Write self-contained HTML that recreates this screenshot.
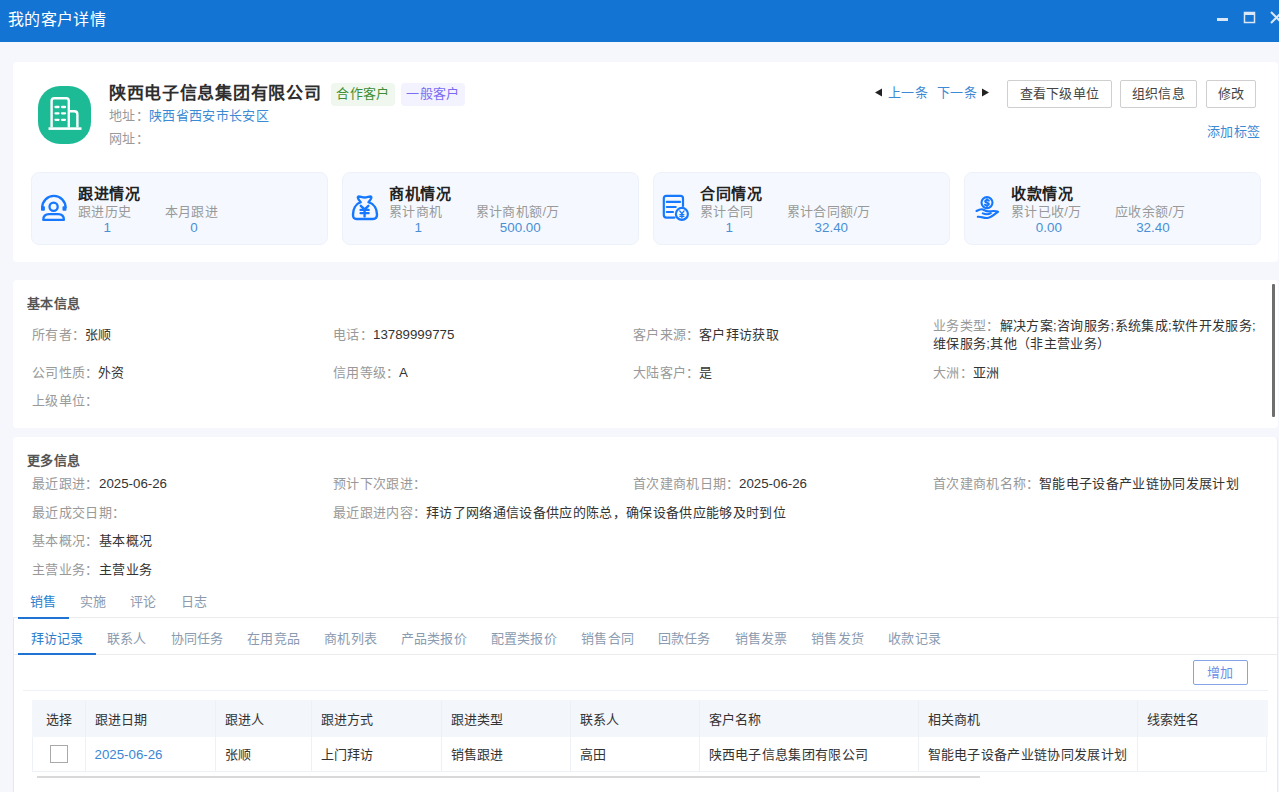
<!DOCTYPE html>
<html lang="zh-CN">
<head>
<meta charset="utf-8">
<style>
*{box-sizing:border-box;margin:0;padding:0}
html,body{width:1279px;height:792px;overflow:hidden}
body{position:relative;background:#f5f7fc;font-family:"Liberation Sans",sans-serif;color:#333;font-size:13px;letter-spacing:.33px}
.num{font-size:13.3px;letter-spacing:0}
.a{position:absolute;white-space:nowrap;line-height:20px}
.hdr{position:absolute;left:0;top:0;width:1279px;height:42px;background:#1374d4}
.card{position:absolute;left:13px;width:1265px;background:#fff;border-radius:4px}
.lbl{color:#999}
.val{color:#333}
.blue{color:#3d8ad4}
.tag{position:absolute;top:83px;height:23px;border-radius:4px;font-size:13px;letter-spacing:.33px;line-height:21px;text-align:center}
.btn{position:absolute;top:80px;height:28px;border:1px solid #cfcfcf;border-radius:2px;background:#fff;color:#444;font-size:13px;letter-spacing:.33px;line-height:26px;text-align:center}
.stat{position:absolute;top:172px;width:297px;height:73px;background:#f5f9ff;border:1px solid #edf2fa;border-radius:8px}
.stat svg{position:absolute}
.st{position:absolute;left:46px;top:11px;font-size:15px;letter-spacing:.5px;font-weight:bold;color:#222;line-height:20px;white-space:nowrap}
.items{position:absolute;left:46px;top:30px;white-space:nowrap}
.it{display:inline-block;margin-right:33.5px;vertical-align:top}
.it .l{color:#999;font-size:13px;letter-spacing:.33px;line-height:18px}
.it .n{color:#4a8fd4;font-size:13.4px;letter-spacing:0;line-height:13px;text-align:center;padding-left:5px}
.sc{letter-spacing:.5px}
</style>
</head>
<body>
<!-- header -->
<div class="hdr"></div>
<div class="a" style="left:8px;top:10px;color:#fff;font-size:16px;line-height:20px">我的客户详情</div>
<svg style="position:absolute;left:1210px;top:8px" width="69" height="20" viewBox="0 0 69 20">
  <rect x="7" y="10" width="11" height="3" fill="#dbe7f6"/>
  <rect x="34.5" y="4.5" width="10" height="10" fill="none" stroke="#dbe7f6" stroke-width="1.5"/>
  <rect x="34" y="4" width="11" height="3" fill="#dbe7f6"/>
  <path d="M61 4 L72 15 M72 4 L61 15" stroke="#dbe7f6" stroke-width="2"/>
</svg>

<!-- card 1 -->
<div class="card" style="top:62px;height:200px"></div>
<div style="position:absolute;left:38px;top:86px;width:53px;height:58px;background:#1dba96;border-radius:22px"></div>
<svg style="position:absolute;left:38px;top:86px" width="53" height="58" viewBox="0 0 53 58">
  <path d="M13.6 41.5 V14.8 Q13.6 12.2 16.2 12.2 H28.2 Q30.8 12.2 30.8 14.8 V41.5" fill="none" stroke="#fff" stroke-width="2.4"/>
  <path d="M30.8 25.3 H36.3 Q39.4 25.3 39.4 28.4 V41.5" fill="none" stroke="#fff" stroke-width="2.4"/>
  <rect x="10.5" y="41.3" width="33" height="2.6" fill="#fff"/>
  <g stroke="#fff" stroke-width="2.3" stroke-linecap="round">
    <path d="M17.5 21 H20.5 M24 21 H27 M17.5 27.3 H20.5 M24 27.3 H27 M17.5 33.8 H20.5 M24 33.8 H27"/>
  </g>
</svg>
<div class="a" style="left:109px;top:84px;font-size:17px;letter-spacing:.7px;font-weight:bold;color:#2e2e2e;line-height:20px">陕西电子信息集团有限公司</div>
<div class="tag" style="left:331px;width:64px;background:#eff7ee;color:#3e8e33">合作客户</div>
<div class="tag" style="left:401px;width:64px;background:#f3f2ff;color:#7a6cf2">一般客户</div>
<div class="a" style="left:109px;top:106px;font-size:13px;letter-spacing:.33px"><span class="lbl">地址：</span></div>
<div class="a blue" style="left:149px;top:106px;font-size:13px;letter-spacing:.33px">陕西省西安市长安区</div>
<div class="a lbl" style="left:109px;top:129px;font-size:13px;letter-spacing:.33px">网址：</div>

<svg style="position:absolute;left:874px;top:88px" width="8" height="10"><path d="M1 4.5 L8 0.5 V8.5 Z" fill="#222"/></svg>
<div class="a blue" style="left:888px;top:83px;font-size:13px;letter-spacing:.33px">上一条</div>
<div class="a blue" style="left:937px;top:83px;font-size:13px;letter-spacing:.33px">下一条</div>
<svg style="position:absolute;left:981px;top:88px" width="8" height="10"><path d="M8 4.5 L1 0.5 V8.5 Z" fill="#222"/></svg>
<div class="btn" style="left:1007px;width:105px">查看下级单位</div>
<div class="btn" style="left:1120px;width:77px">组织信息</div>
<div class="btn" style="left:1206px;width:50px">修改</div>
<div class="a blue" style="left:1207px;top:122px;font-size:13px;letter-spacing:.33px">添加标签</div>

<!-- stat cards -->
<div class="stat" style="left:31px">
  <svg width="36" height="38" viewBox="0 0 36 38" style="left:4px;top:15px">
    <g fill="none" stroke="#1677ff" stroke-width="2.3" stroke-linejoin="round" stroke-linecap="round">
      <path d="M6.2 19.6 A11.7 11.7 0 0 1 29.6 19.6"/>
      <circle cx="17.6" cy="18.8" r="4.1"/>
      <path d="M7.3 31.9 C7.3 28.2 9.5 26.2 13 26.2 H22.2 C25.7 26.2 27.9 28.2 27.9 31.9 Z"/>
    </g>
    <rect x="5" y="18.3" width="3.9" height="4.4" rx="0.8" fill="#1677ff"/>
    <rect x="26.5" y="18.3" width="3.9" height="4.4" rx="0.8" fill="#1677ff"/>
  </svg>
  <div class="st">跟进情况</div>
  <div class="items"><div class="it"><div class="l">跟进历史</div><div class="n">1</div></div><div class="it"><div class="l">本月跟进</div><div class="n">0</div></div></div>
</div>
<div class="stat" style="left:342px">
  <svg width="36" height="38" viewBox="0 0 36 38" style="left:3px;top:15px">
    <g fill="none" stroke="#1677ff" stroke-width="2.4" stroke-linejoin="round" stroke-linecap="round">
      <path d="M12.3 8.6 C13.5 8.1 16 9.5 18.6 9.5 C21.2 9.5 23.7 8.1 24.9 8.6 C26 9.1 25.3 11 22.5 14.2 C28.5 16 31 21.5 31 26.5 C31 30 29.5 31 27 31 L10.5 31 C8 31 7 30 7 26.5 C7 21.5 9.5 16 14.7 14.2 C11.9 11 11.2 9.1 12.3 8.6 Z"/>
      <path d="M14.8 17.8 L18.6 21.4 L22.4 17.8 M14.6 21.9 H22.6 M14.6 25.1 H22.6 M18.6 21.4 V28.4"/>
    </g>
  </svg>
  <div class="st">商机情况</div>
  <div class="items"><div class="it"><div class="l">累计商机</div><div class="n">1</div></div><div class="it"><div class="l">累计商机额/万</div><div class="n">500.00</div></div></div>
</div>
<div class="stat" style="left:653px">
  <svg width="36" height="38" viewBox="0 0 36 38" style="left:2px;top:15px">
    <g fill="none" stroke="#1677ff" stroke-width="2.2" stroke-linejoin="round" stroke-linecap="round">
      <path d="M18.5 29.6 H10.3 Q7.8 29.6 7.8 27.1 V10.3 Q7.8 7.8 10.3 7.8 H24.5 Q27 7.8 27 10.3 V18"/>
      <path d="M10.8 13.9 H24 M10.8 19 H19.7 M10.8 24 H17"/>
      <circle cx="25.9" cy="25.9" r="6"/>
    </g>
    <g fill="none" stroke="#1677ff" stroke-width="1.3" stroke-linecap="round">
      <path d="M23.7 22.9 L25.9 25.6 L28.1 22.9 M23.9 26.6 H27.9 M23.9 28.4 H27.9 M25.9 25.6 V29.8"/>
    </g>
  </svg>
  <div class="st">合同情况</div>
  <div class="items"><div class="it"><div class="l">累计合同</div><div class="n">1</div></div><div class="it"><div class="l">累计合同额/万</div><div class="n">32.40</div></div></div>
</div>
<div class="stat" style="left:964px">
  <svg width="36" height="38" viewBox="0 0 36 38" style="left:5px;top:15px">
    <g fill="none" stroke="#1677ff" stroke-width="2.1" stroke-linejoin="round" stroke-linecap="round">
      <circle cx="17" cy="14.6" r="5.5"/>
      <path d="M18.8 12.6 C18.2 11.8 15.2 11.6 15.2 13.3 C15.2 15 18.9 14.3 18.9 16.1 C18.9 17.6 15.9 17.6 15 16.8 M17 11.2 V12.1 M17 17.4 V18.1"/>
      <path d="M6.5 23 C9 21.5 11 20.5 13 21.5 C15 22.5 16.5 23.6 19 23.4 C22 23.2 25 22.3 27.8 23.8"/>
      <path d="M12.8 25.4 C15 26.3 18.5 26.5 20.8 25.2"/>
      <path d="M7.8 28.8 C11 28.2 14 30.5 17.5 30 C21 29.5 25 26 27.8 23.8"/>
    </g>
  </svg>
  <div class="st">收款情况</div>
  <div class="items"><div class="it"><div class="l">累计已收/万</div><div class="n">0.00</div></div><div class="it"><div class="l">应收余额/万</div><div class="n">32.40</div></div></div>
</div>

<!-- card 2 basic info -->
<div class="card" style="top:280px;height:148px"></div>
<div class="a" style="left:27px;top:294px;font-size:13px;letter-spacing:.33px;font-weight:bold;color:#555">基本信息</div>
<div class="a" style="left:32px;top:325px"><span class="lbl">所有者：</span></div><div class="a val" style="left:85px;top:325px">张顺</div>
<div class="a" style="left:333px;top:325px"><span class="lbl">电话：</span></div><div class="a val num" style="left:373px;top:325px">13789999775</div>
<div class="a" style="left:633px;top:325px"><span class="lbl">客户来源：</span></div><div class="a val" style="left:699px;top:325px">客户拜访获取</div>
<div style="position:absolute;left:933px;top:317px;width:340px;white-space:nowrap;line-height:17.6px;font-size:13px;letter-spacing:.33px"><span class="lbl">业务类型：</span><span class="val">解决方案<span class="sc">;</span>咨询服务<span class="sc">;</span>系统集成<span class="sc">;</span>软件开发服务<span class="sc">;</span><br>维保服务<span class="sc">;</span>其他（非主营业务）</span></div>
<div class="a" style="left:32px;top:363px"><span class="lbl">公司性质：</span></div><div class="a val" style="left:98px;top:363px">外资</div>
<div class="a" style="left:333px;top:363px"><span class="lbl">信用等级：</span></div><div class="a val num" style="left:399px;top:363px">A</div>
<div class="a" style="left:633px;top:363px"><span class="lbl">大陆客户：</span></div><div class="a val" style="left:699px;top:363px">是</div>
<div class="a" style="left:933px;top:363px"><span class="lbl">大洲：</span></div><div class="a val" style="left:973px;top:363px">亚洲</div>
<div class="a" style="left:32px;top:391px"><span class="lbl">上级单位：</span></div>
<div style="position:absolute;left:1272px;top:284px;width:3px;height:133px;background:#6e6e6e;border-radius:1px"></div>

<!-- card 3 more info -->
<div class="card" style="top:437px;height:355px;border-radius:4px 4px 0 0;border-right:1px solid #eceef3"></div>
<div class="a" style="left:27px;top:451px;font-size:13px;letter-spacing:.33px;font-weight:bold;color:#555">更多信息</div>
<div class="a" style="left:32px;top:474px"><span class="lbl">最近跟进：</span></div><div class="a val num" style="left:99px;top:474px">2025-06-26</div>
<div class="a" style="left:333px;top:474px"><span class="lbl">预计下次跟进：</span></div>
<div class="a" style="left:633px;top:474px"><span class="lbl">首次建商机日期：</span></div><div class="a val num" style="left:739px;top:474px">2025-06-26</div>
<div class="a" style="left:933px;top:474px"><span class="lbl">首次建商机名称：</span></div><div class="a val" style="left:1039px;top:474px">智能电子设备产业链协同发展计划</div>
<div class="a" style="left:32px;top:503px"><span class="lbl">最近成交日期：</span></div>
<div class="a" style="left:333px;top:503px"><span class="lbl">最近跟进内容：</span></div><div class="a val" style="left:426px;top:503px">拜访了网络通信设备供应的陈总，确保设备供应能够及时到位</div>
<div class="a" style="left:32px;top:531px"><span class="lbl">基本概况：</span></div><div class="a val" style="left:99px;top:531px">基本概况</div>
<div class="a" style="left:32px;top:560px"><span class="lbl">主营业务：</span></div><div class="a val" style="left:99px;top:560px">主营业务</div>

<!-- main tabs -->
<div style="position:absolute;left:13px;top:617px;width:1266px;height:1px;background:#ececec"></div>
<div class="a blue" style="left:30px;top:592px;font-size:13px;letter-spacing:.33px;color:#2d7fce">销售</div>
<div class="a" style="left:80px;top:592px;color:#8e9aab">实施</div>
<div class="a" style="left:130px;top:592px;color:#8e9aab">评论</div>
<div class="a" style="left:181px;top:592px;color:#8e9aab">日志</div>
<div style="position:absolute;left:18px;top:617px;width:51px;height:2px;background:#1f73d3"></div>

<!-- sub panel -->
<div style="position:absolute;left:13px;top:618px;width:1265px;height:174px;border-left:1px solid #e8e8e8;border-right:1px solid #e8e8e8"></div>
<div style="position:absolute;left:13px;top:654px;width:1265px;height:1px;background:#ececec"></div>
<div class="a" style="left:30.5px;top:629px;color:#2d7fce">拜访记录</div>
<div class="a" style="left:106.5px;top:629px;color:#8a9bb0">联系人</div>
<div class="a" style="left:170.5px;top:629px;color:#8a9bb0">协同任务</div>
<div class="a" style="left:247px;top:629px;color:#8a9bb0">在用竞品</div>
<div class="a" style="left:324px;top:629px;color:#8a9bb0">商机列表</div>
<div class="a" style="left:400.5px;top:629px;color:#8a9bb0">产品类报价</div>
<div class="a" style="left:490.5px;top:629px;color:#8a9bb0">配置类报价</div>
<div class="a" style="left:581px;top:629px;color:#8a9bb0">销售合同</div>
<div class="a" style="left:657.5px;top:629px;color:#8a9bb0">回款任务</div>
<div class="a" style="left:734.5px;top:629px;color:#8a9bb0">销售发票</div>
<div class="a" style="left:811px;top:629px;color:#8a9bb0">销售发货</div>
<div class="a" style="left:888px;top:629px;color:#8a9bb0">收款记录</div>

<div style="position:absolute;left:18px;top:653px;width:78px;height:2px;background:#1f73d3"></div>

<!-- toolbar -->
<div class="btn" style="left:1193px;top:660px;width:55px;height:25px;line-height:23px;border-color:#86a3ea;color:#6c8fe6;font-size:13px;letter-spacing:.33px">增加</div>
<div style="position:absolute;left:23px;top:690px;width:1245px;height:1px;background:#eef1f6"></div>

<!-- table -->
<div style="position:absolute;left:32px;top:700px;width:1236px;height:37px;background:#f3f6fb"></div>
<div style="position:absolute;left:32px;top:737px;width:1235px;height:35px;border:1px solid #eef1f6;border-top:none"></div>
<div style="position:absolute;left:85px;top:700px;width:1px;height:72px;background:#edf0f5"></div>
<div style="position:absolute;left:215px;top:700px;width:1px;height:72px;background:#edf0f5"></div>
<div style="position:absolute;left:311px;top:700px;width:1px;height:72px;background:#edf0f5"></div>
<div style="position:absolute;left:441px;top:700px;width:1px;height:72px;background:#edf0f5"></div>
<div style="position:absolute;left:570px;top:700px;width:1px;height:72px;background:#edf0f5"></div>
<div style="position:absolute;left:699px;top:700px;width:1px;height:72px;background:#edf0f5"></div>
<div style="position:absolute;left:918px;top:700px;width:1px;height:72px;background:#edf0f5"></div>
<div style="position:absolute;left:1137px;top:700px;width:1px;height:72px;background:#edf0f5"></div>
<div class="a" style="left:46px;top:710px;color:#333">选择</div>
<div class="a" style="left:94.5px;top:710px;color:#333">跟进日期</div>
<div class="a num" style="left:94.5px;top:745px;color:#3a88d5">2025-06-26</div>
<div class="a" style="left:224.5px;top:710px;color:#333">跟进人</div>
<div class="a" style="left:224.5px;top:745px;color:#333">张顺</div>
<div class="a" style="left:320.5px;top:710px;color:#333">跟进方式</div>
<div class="a" style="left:320.5px;top:745px;color:#333">上门拜访</div>
<div class="a" style="left:450.5px;top:710px;color:#333">跟进类型</div>
<div class="a" style="left:450.5px;top:745px;color:#333">销售跟进</div>
<div class="a" style="left:579.5px;top:710px;color:#333">联系人</div>
<div class="a" style="left:579.5px;top:745px;color:#333">高田</div>
<div class="a" style="left:708.5px;top:710px;color:#333">客户名称</div>
<div class="a" style="left:708.5px;top:745px;color:#333">陕西电子信息集团有限公司</div>
<div class="a" style="left:927.5px;top:710px;color:#333">相关商机</div>
<div class="a" style="left:927.5px;top:745px;color:#333">智能电子设备产业链协同发展计划</div>
<div class="a" style="left:1146.5px;top:710px;color:#333">线索姓名</div>
<div style="position:absolute;left:50px;top:745px;width:18px;height:18px;border:1px solid #a9a9a9;background:#fff"></div>

<div style="position:absolute;left:37px;top:776px;width:943px;height:2px;background:#d9d9d9"></div>
</body>
</html>
